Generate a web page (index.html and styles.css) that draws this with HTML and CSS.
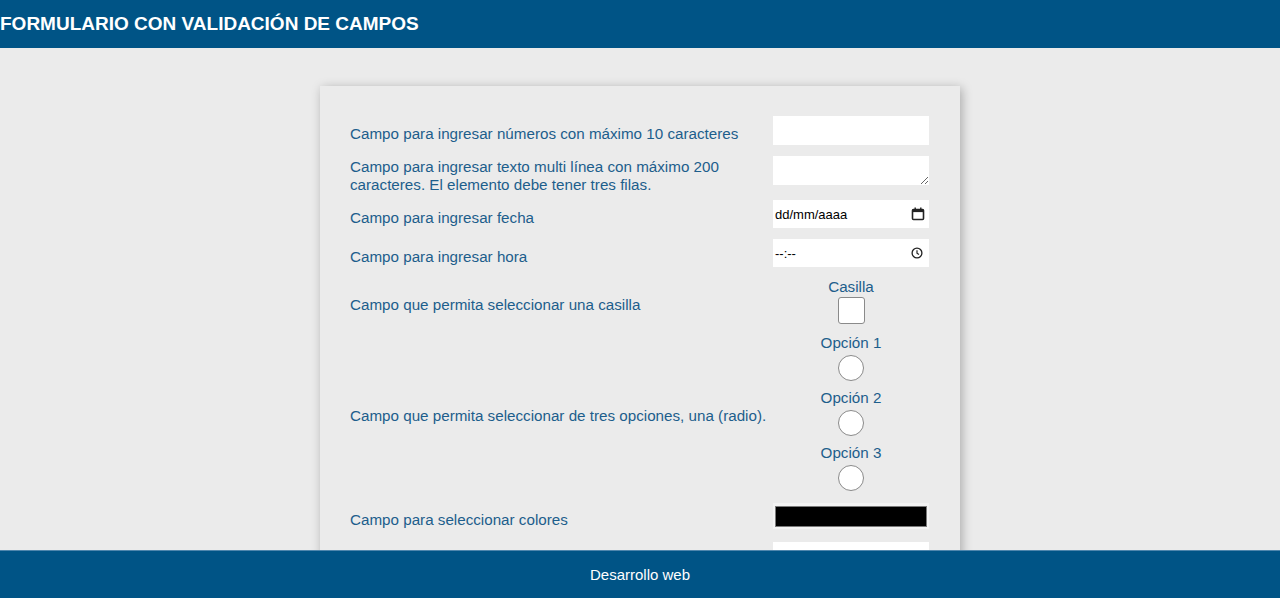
FILE: index.html
```html
<!DOCTYPE html>
<html lang="es">
<head>
<meta charset="utf-8">
<title>Formulario con validación de campos</title>
<link rel="stylesheet" href="styles.css">
</head>
<body>
<header class="topbar">
  <h1 class="title">FORMULARIO CON VALIDACIÓN DE CAMPOS</h1>
</header>

<main class="page">
  <form class="card">
    <div class="row">
      <label class="label" for="num">Campo para ingresar números con máximo 10 caracteres</label>
      <div class="control"><input class="field" id="num" type="text" maxlength="10"></div>
    </div>

    <div class="row row-top">
      <label class="label label-multi" for="txt">Campo para ingresar texto multi línea con máximo 200 caracteres. El elemento debe tener tres filas.</label>
      <div class="control"><textarea class="field area" id="txt" rows="3" maxlength="200"></textarea></div>
    </div>

    <div class="row row-tight">
      <label class="label">Campo para ingresar fecha</label>
      <div class="control">
        <div class="field fake">
          <span class="fake-text">dd/mm/aaaa</span>
          <svg class="ico" width="14" height="14" viewBox="0 0 14 14" aria-hidden="true">
            <rect x="1.5" y="2.5" width="11" height="10" rx="1" fill="none" stroke="#222" stroke-width="1.6"/>
            <rect x="1.5" y="2.5" width="11" height="2.6" fill="#222"/>
            <rect x="3.5" y="0.5" width="1.4" height="3" fill="#222"/>
            <rect x="9.1" y="0.5" width="1.4" height="3" fill="#222"/>
          </svg>
        </div>
      </div>
    </div>

    <div class="row">
      <label class="label">Campo para ingresar hora</label>
      <div class="control">
        <div class="field fake">
          <span class="fake-text">--:--</span>
          <svg class="ico ico-clock" width="12" height="12" viewBox="0 0 12 12" aria-hidden="true">
            <circle cx="6" cy="6" r="4.9" fill="none" stroke="#222" stroke-width="1.3"/>
            <path d="M6 3.2V6.2L8 7.6" fill="none" stroke="#222" stroke-width="1.2"/>
          </svg>
        </div>
      </div>
    </div>

    <div class="row">
      <span class="label">Campo que permita seleccionar una casilla</span>
      <div class="control stack">
        <label class="opt-label" for="chk">Casilla</label>
        <input class="check" id="chk" type="checkbox">
      </div>
    </div>

    <div class="row row-radio">
      <span class="label">Campo que permita seleccionar de tres opciones, una (radio).</span>
      <div class="control stack">
        <div class="opt">
          <label class="opt-label" for="r1">Opción 1</label>
          <input class="radio" id="r1" type="radio" name="op">
        </div>
        <div class="opt">
          <label class="opt-label" for="r2">Opción 2</label>
          <input class="radio" id="r2" type="radio" name="op">
        </div>
        <div class="opt">
          <label class="opt-label" for="r3">Opción 3</label>
          <input class="radio" id="r3" type="radio" name="op">
        </div>
      </div>
    </div>

    <div class="row row-color">
      <label class="label" for="col">Campo para seleccionar colores</label>
      <div class="control"><input class="color" id="col" type="color" value="#000000"></div>
    </div>

    <div class="row row-last">
      <label class="label" for="mail">Campo para ingresar correo electrónico</label>
      <div class="control"><input class="field" id="mail" type="email"></div>
    </div>
  </form>
</main>

<footer class="bottombar">Desarrollo web</footer>
</body>
</html>
```

FILE: styles.css
```css
* { box-sizing: border-box; }

html, body {
  margin: 0;
  padding: 0;
}

body {
  background: #ebebeb;
  font-family: "Liberation Sans", Arial, sans-serif;
  color: #1d5e8c;
}

.topbar {
  height: 48px;
  background: #005486;
  display: flex;
  align-items: center;
}

.title {
  margin: 0;
  color: #ffffff;
  font-size: 19px;
  font-weight: bold;
  line-height: 24px;
}

.page {
  display: flex;
  justify-content: center;
  padding: 38px 0 60px;
}

.card {
  width: 640px;
  padding: 30px 31px 20px 30px;
  background: #ebebeb;
  box-shadow: 2px 2px 10px rgba(0, 0, 0, 0.28);
  display: flex;
  flex-direction: column;
  gap: 11px;
}

.row {
  display: grid;
  grid-template-columns: 1fr 156px;
  align-items: center;
}

.row-top { align-items: start; }
.row-tight { margin-top: -5px; }
.row-radio { margin-top: -2px; }
.row-color { margin-top: 1px; }
.row-last { margin-top: 2px; }

.label {
  font-size: 15.2px;
  line-height: 18px;
  padding-top: 7px;
  color: #1d5e8c;
}

.label-multi {
  padding-top: 2px;
  padding-right: 30px;
}

.control {
  display: flex;
  justify-content: center;
}

.field {
  width: 156px;
  height: 29px;
  border: none;
  background: #ffffff;
  font-family: "Liberation Sans", Arial, sans-serif;
  font-size: 13px;
  padding: 0 2px;
  outline: none;
}

.area {
  resize: vertical;
  display: block;
}

.fake {
  height: 28px;
  display: flex;
  align-items: center;
  justify-content: space-between;
  color: #000;
  padding-right: 4px;
}

.fake-text { font-size: 13px; }

.ico { display: block; }
.ico-clock { margin-right: 2px; }

.stack {
  flex-direction: column;
  align-items: center;
}

.opt {
  display: flex;
  flex-direction: column;
  align-items: center;
}

.opt + .opt { margin-top: 8px; }

.opt-label {
  font-size: 15.2px;
  line-height: 18px;
  color: #1d5e8c;
}

.check {
  appearance: none;
  -webkit-appearance: none;
  width: 27px;
  height: 27px;
  margin: 1px 0 1px;
  background: #fff;
  border: 1px solid #8a8a8a;
  border-radius: 3px;
}

.radio {
  appearance: none;
  -webkit-appearance: none;
  width: 26px;
  height: 26px;
  margin: 3px 0 0;
  background: #fff;
  border: 1px solid #8a8a8a;
  border-radius: 50%;
}

.color {
  -webkit-appearance: none;
  appearance: none;
  display: block;
  width: 156px;
  height: 26px;
  min-height: 26px;
  padding: 3px 2px 2px;
  border: none;
  background: #f3f3f3;
  block-size: 26px;
}

.color::-webkit-color-swatch-wrapper { padding: 0; }
.color::-webkit-color-swatch {
  border: 1px solid #7a7a7a;
  border-radius: 0;
}

.bottombar {
  position: fixed;
  left: 0;
  right: 0;
  bottom: 0;
  height: 48px;
  background: #005486;
  border-top: 1px solid #4f86ad;
  color: #ffffff;
  font-size: 15px;
  display: flex;
  align-items: center;
  justify-content: center;
}
```
